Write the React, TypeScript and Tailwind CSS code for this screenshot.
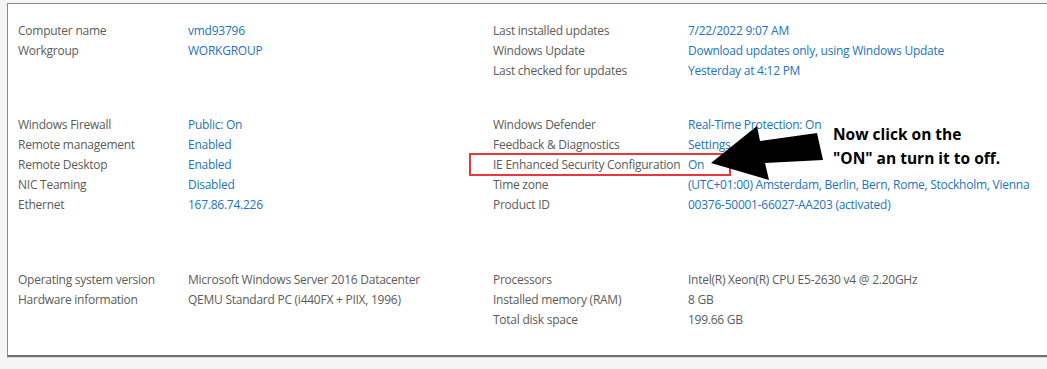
const font = { fontFamily: '"Open Sans", "Noto Sans", sans-serif' };

type Row = [string, string];

const Half = ({ rows, link, labelW }: { rows: Row[]; link: boolean; labelW: string }) => (
  <div className="flex flex-col">
    {rows.map(([k, v]) => (
      <div key={k} className="flex h-5 items-center whitespace-nowrap">
        <span className={`${labelW} text-[#5b5b5b]`}>{k}</span>
        <span className={link ? "text-[#1a73c4]" : "text-[#5b5b5b]"}>{v}</span>
      </div>
    ))}
  </div>
);

const Section = ({ left, right, link, className }: { left: Row[]; right: Row[]; link: boolean; className: string }) => (
  <div className={`flex ${className}`}>
    <div className="w-[475px]">
      <Half rows={left} link={link} labelW="w-[170px]" />
    </div>
    <Half rows={right} link={link} labelW="w-[195px]" />
  </div>
);

export default function App() {
  return (
    <div className="relative h-[369px] w-[1047px] overflow-hidden bg-[#f5f5f5] pt-[3px] pl-[7px] text-[12px] tracking-[-0.25px]" style={font}>
      <div className="h-[354px] border-t border-l border-[#8c8c8c] border-b-2 border-b-[#6f6f6f] bg-white pl-[10px] pt-[17px] shadow-[0_1px_0_#d8d8d8]">
        <Section
          link
          className="h-[60px]"
          left={[["Computer name", "vmd93796"], ["Workgroup", "WORKGROUP"]]}
          right={[
            ["Last installed updates", "7/22/2022 9:07 AM"],
            ["Windows Update", "Download updates only, using Windows Update"],
            ["Last checked for updates", "Yesterday at 4:12 PM"],
          ]}
        />
        <Section
          link
          className="mt-[34px] h-[100px]"
          left={[
            ["Windows Firewall", "Public: On"],
            ["Remote management", "Enabled"],
            ["Remote Desktop", "Enabled"],
            ["NIC Teaming", "Disabled"],
            ["Ethernet", "167.86.74.226"],
          ]}
          right={[
            ["Windows Defender", "Real-Time Protection: On"],
            ["Feedback & Diagnostics", "Settings"],
            ["IE Enhanced Security Configuration", "On"],
            ["Time zone", "(UTC+01:00) Amsterdam, Berlin, Bern, Rome, Stockholm, Vienna"],
            ["Product ID", "00376-50001-66027-AA203 (activated)"],
          ]}
        />
        <Section
          link={false}
          className="mt-[55px]"
          left={[
            ["Operating system version", "Microsoft Windows Server 2016 Datacenter"],
            ["Hardware information", "QEMU Standard PC (i440FX + PIIX, 1996)"],
          ]}
          right={[
            ["Processors", "Intel(R) Xeon(R) CPU E5-2630 v4 @ 2.20GHz"],
            ["Installed memory (RAM)", "8 GB"],
            ["Total disk space", "199.66 GB"],
          ]}
        />
      </div>

      {/* annotation */}
      <div className="absolute left-[469px] top-[153px] h-[23px] w-[262px] border-[2px] border-solid border-[#e8383d]" />
      <svg className="absolute left-0 top-0" width="1047" height="369">
        <polygon
          points="711,163 757,126 760,141 817,133 823,160 765,163 769,180"
          fill="#000"
        />
      </svg>
      <div className="absolute left-[833px] top-[122px] text-[15.5px] font-bold leading-[24px] tracking-normal text-black">
        <div>Now click on the</div>
        <div>"ON" an turn it to off.</div>
      </div>
    </div>
  );
}
